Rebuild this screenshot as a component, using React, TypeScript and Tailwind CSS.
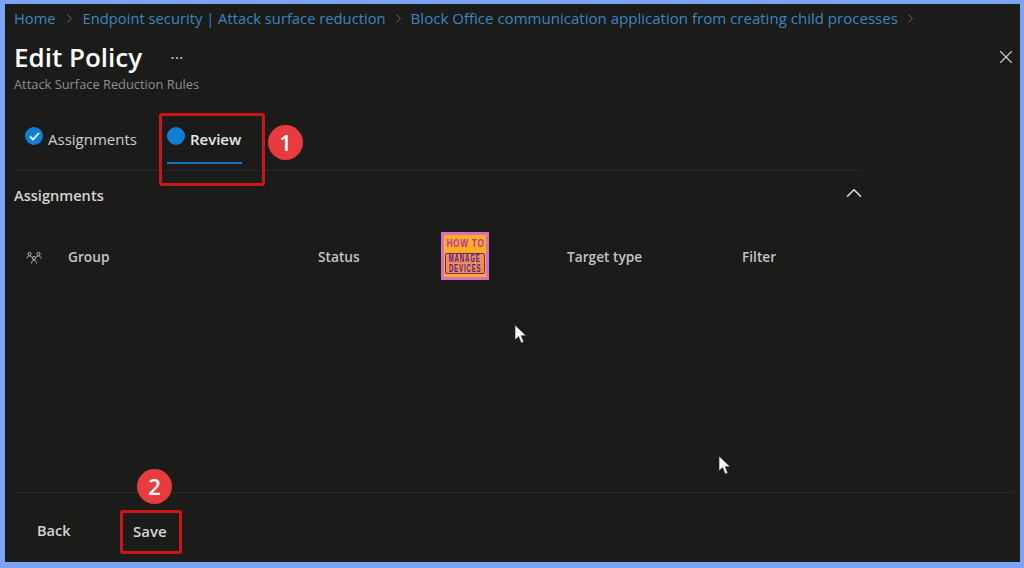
import { X, ChevronRight, ChevronUp } from 'lucide-react';

const font = "font-['Open_Sans','Noto_Sans',sans-serif]";

function Cursor({ className }: { className: string }) {
  return (
    <svg className={className} width="14" height="20" viewBox="0 0 14 20">
      <path d="M1 1v15l3.6-3.4L7.2 19l2.6-1.1-2.6-6.2h5z" fill="#f4f4f4" stroke="#222" strokeWidth="0.6" />
    </svg>
  );
}

function Badge({ n, className }: { n: string; className: string }) {
  return (
    <div className={`absolute flex h-[35px] w-[35px] items-center justify-center rounded-full bg-[#e63b3f] text-[22px] font-semibold text-white ${className}`}>
      {n}
    </div>
  );
}

function GroupIcon() {
  return (
    <svg width="16" height="14" viewBox="0 0 16 14" fill="none" stroke="#b5b5b5" strokeWidth="1">
      <circle cx="3.5" cy="3" r="1.6" />
      <circle cx="12.5" cy="3" r="1.6" />
      <circle cx="8" cy="7" r="1.6" />
      <path d="M1 7.5c0-1.5 1-2.5 2.5-2.5S6 6 6.5 7M15 7.5c0-1.5-1-2.5-2.5-2.5S10 6 9.5 7M5.5 12.5c0-1.5 1-3.5 2.5-3.5s2.5 2 2.5 3.5" />
    </svg>
  );
}

function Logo() {
  return (
    <div className="absolute left-[441px] top-[232px] flex h-[48px] w-[48px] flex-col items-center border-[3px] border-[#d86fc4] bg-[#fdae1c] font-['Liberation_Sans',sans-serif] leading-none">
      <div className="mt-[3px] scale-x-75 whitespace-nowrap text-[11px] font-bold tracking-[1px] text-[#c02ac0]">HOW TO</div>
      <div className="mt-[4px] flex h-[21px] w-[40px] flex-col items-center justify-center rounded-[2px] border border-[#6a2a70] bg-[#ee8f5a] text-[10px] font-bold leading-[10px] tracking-[1.5px] text-[#5a2080]">
        <span className="scale-x-[0.6] whitespace-nowrap">MANAGE</span>
        <span className="scale-x-[0.6] whitespace-nowrap">DEVICES</span>
      </div>
    </div>
  );
}

export default function App() {
  return (
    <div className={`relative flex h-[568px] w-[1024px] flex-col overflow-hidden bg-[#7ca4f6] pb-[6px] pl-[5px] pr-[4px] pt-[4px] ${font}`}>
      <div className="flex flex-1 flex-col bg-[#1b1b1a]">
        {/* Breadcrumb */}
        <div className="flex h-[29px] items-center pl-[9px] text-[#3b85c0]">
          <span className="text-[14.7px]">Home</span>
          <ChevronRight size={15} strokeWidth={1.2} className="mx-[6px] text-[#8a8a8a]" />
          <span className="text-[14.75px]">Endpoint security | Attack surface reduction</span>
          <ChevronRight size={15} strokeWidth={1.2} className="mx-[5px] text-[#8a8a8a]" />
          <span className="text-[15.05px]">Block Office communication application from creating child processes</span>
          <ChevronRight size={15} strokeWidth={1.2} className="mx-[5px] text-[#8a8a8a]" />
        </div>

        {/* Title */}
        <div className="mt-[6px] flex items-center justify-between pl-[9px] pr-[3px]">
          <div className="flex items-center">
            <h1 className="text-[26px] font-semibold leading-[36px] text-white">Edit Policy</h1>
            <span className="ml-[28px] text-[17px] leading-none text-[#c8c8c8]">···</span>
          </div>
          <X size={22} strokeWidth={1.2} className="text-[#d0d0d0]" />
        </div>
        <div className="mt-[1px] pl-[9px] text-[12.85px] leading-[16px] text-[#8e8e8e]">Attack Surface Reduction Rules</div>

        {/* Tabs */}
        <div className="ml-[9px] mt-[20px] flex h-[59px] w-[846px] border-b border-[#2a2a2a] pl-[11px]">
          <div className="flex items-start pt-[15px]">
            <span className="flex h-[18px] w-[18px] items-center justify-center rounded-full bg-[#0f7fd6]">
              <svg width="11" height="9" viewBox="0 0 11 9" fill="none" stroke="white" strokeWidth="1.8">
                <path d="M1 4.5l3 3 6-6.5" />
              </svg>
            </span>
            <span className="ml-[5px] mt-[2px] text-[15px] leading-[20px] text-[#cfcfcf]">Assignments</span>
          </div>
          <div className="relative ml-[30px] flex w-[75px] items-start pt-[15px]">
            <span className="h-[18px] w-[18px] rounded-full bg-[#0f7fd6]" />
            <span className="ml-[5px] mt-[2px] text-[15px] font-semibold leading-[20px] text-[#e8e8e8]">Review</span>
            <div className="absolute bottom-[6px] left-0 h-[2px] w-full bg-[#1276c2]" />
          </div>
        </div>

        {/* Assignments section */}
        <div className="flex h-[50px] w-[862px] items-center justify-between pl-[9px]">
          <span className="text-[14.6px] font-semibold text-[#d4d4d4]">Assignments</span>
          <ChevronUp size={26} strokeWidth={1.5} className="mb-[6px] text-[#dcdcdc]" />
        </div>

        {/* Table header */}
        <div className="ml-[9px] mt-[10px] flex h-[52px] w-[853px] items-center border-b border-[#202020] pl-[12px] pt-[2px] text-[13.7px] font-semibold text-[#c4c4c4]">
          <span className="w-[42px]"><GroupIcon /></span>
          <span className="w-[250px]">Group</span>
          <span className="w-[249px]">Status</span>
          <span className="w-[175px]">Target type</span>
          <span>Filter</span>
        </div>

        <div className="flex-1" />

        {/* Footer */}
        <div className="ml-[9px] mr-[8px] flex h-[70px] items-center border-t border-[#2a2a2a] pl-[23px] pt-[7px] text-[14.5px] font-semibold text-[#d4d4d4]">
          <span className="w-[96px]">Back</span>
          <span className="text-[15px]">Save</span>
        </div>
      </div>

      {/* Annotations */}
      <div className="absolute left-[159px] top-[113px] h-[73px] w-[106px] rounded-[3px] border-[3px] border-[#cc141b]" />
      <div className="absolute left-[120px] top-[510px] h-[44px] w-[62px] rounded-[3px] border-[3px] border-[#cc141b]" />
      <Badge n="1" className="left-[268px] top-[125px]" />
      <Badge n="2" className="left-[137px] top-[469px]" />
      <Logo />
      <Cursor className="absolute left-[514px] top-[324px]" />
      <Cursor className="absolute left-[718px] top-[455px]" />
    </div>
  );
}
